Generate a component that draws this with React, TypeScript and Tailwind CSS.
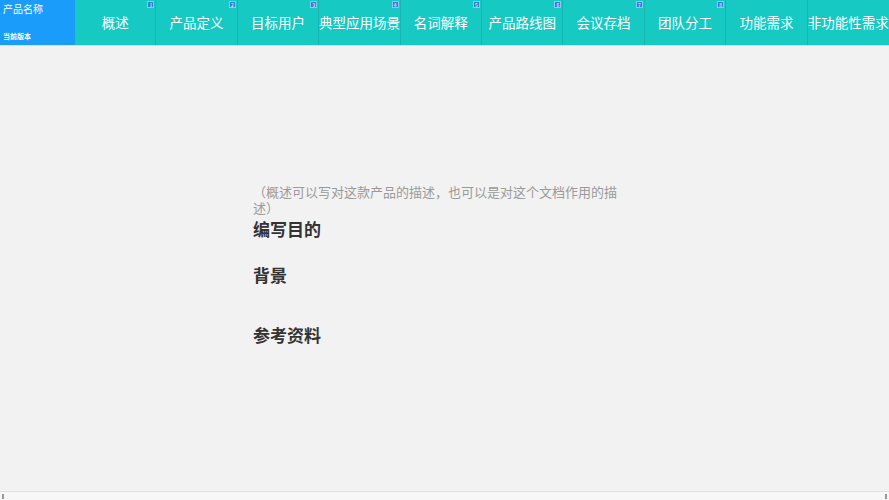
import React from "react";

const tabs = [
  { label: "概述", badge: "1" },
  { label: "产品定义", badge: "2" },
  { label: "目标用户", badge: "3" },
  { label: "典型应用场景", badge: "4" },
  { label: "名词解释", badge: "5" },
  { label: "产品路线图", badge: "6" },
  { label: "会议存档", badge: "7" },
  { label: "团队分工", badge: "8" },
  { label: "功能需求", badge: "" },
  { label: "非功能性需求", badge: "" },
];

const font = { fontFamily: '"Noto Sans CJK SC", "Noto Sans", sans-serif' };

export default function App() {
  return (
    <div className="flex h-[500px] w-[889px] flex-col overflow-hidden bg-[#f2f2f2]" style={font}>
      {/* Top bar */}
      <header className="flex h-[46px] shrink-0 border-b border-[#e0e0e0]">
        <div className="flex w-[75px] shrink-0 flex-col bg-[#1a9cfb] px-[3px] pt-[2px] text-white">
          <span className="text-[10px] leading-[14px]">产品名称</span>
          <span className="mt-[16px] text-[7px] font-bold leading-[9px]">当前版本</span>
        </div>
        <nav className="grid flex-1 grid-cols-10 bg-[#17c9c3]">
          {tabs.map((t, i) => (
            <div
              key={t.label}
              className={`relative flex items-center justify-center whitespace-nowrap text-[13.5px] text-white ${
                i < tabs.length - 1 ? "border-r border-[#12b7b2]" : ""
              }`}
            >
              {t.label}
              {t.badge && (
                <span className="absolute right-[1px] top-[1px] flex h-[7px] w-[7px] items-center justify-center border border-[#8fc4f5] bg-[#2f7fd8] text-[5px] leading-none text-white">
                  {t.badge}
                </span>
              )}
            </div>
          ))}
        </nav>
      </header>

      {/* Content */}
      <main className="flex-1 pl-[253px] pt-[138px]">
        <p className="w-[372px] text-[13px] leading-[16px] text-[#9a9a9a]">
          （概述可以写对这款产品的描述，也可以是对这个文档作用的描述）
        </p>
        <h2 className="mt-[2px] text-[17px] font-bold leading-[22px] text-[#333]">编写目的</h2>
        <h2 className="mt-[24px] text-[17px] font-bold leading-[22px] text-[#333]">背景</h2>
        <h2 className="mt-[38px] text-[17px] font-bold leading-[22px] text-[#333]">参考资料</h2>
      </main>

      {/* Scroll strip */}
      <div className="flex h-[9px] shrink-0 items-center justify-between border-t border-[#e2e2e2] bg-[#f7f7f7] px-[2px]">
        <span className="h-[5px] w-[2px] bg-[#999]" />
        <span className="h-[5px] w-[2px] bg-[#999]" />
      </div>
    </div>
  );
}
